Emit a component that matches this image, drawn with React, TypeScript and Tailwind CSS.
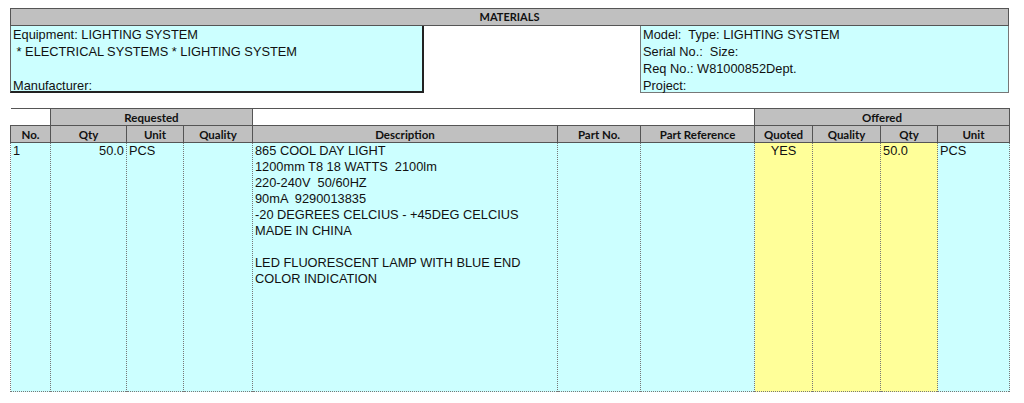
import React from 'react';

const cols = [40, 76, 57, 69, 305, 83, 114, 58, 68, 57, 72];

const descLines = [
  '865 COOL DAY LIGHT',
  '1200mm T8 18 WATTS  2100lm',
  '220-240V  50/60HZ',
  '90mA  9290013835',
  '-20 DEGREES CELCIUS - +45DEG CELCIUS',
  'MADE IN CHINA',
  '',
  'LED FLUORESCENT LAMP WITH BLUE END',
  'COLOR INDICATION',
];

const head = 'bg-[#c0c0c0] border border-[#555] text-center font-bold text-[11.5px] leading-[15px] text-[#111] p-0';
const body = 'align-top border-x border-dotted border-[#777] text-[12.8px] leading-[16px] text-[#111] px-[2px] pt-0';

const App: React.FC = () => {
  return (
    <div className="w-[1024px] h-[403px] bg-white pt-[8px] px-[10px]" style={{ fontFamily: '"Liberation Sans", Arial, sans-serif' }}>
      {/* Title */}
      <div className="w-[999px] h-[18px] bg-[#c0c0c0] border border-[#555] text-center font-bold text-[11px] leading-[16px] text-[#111]" style={{ fontFamily: 'Lato, "Open Sans", sans-serif' }}>
        MATERIALS
      </div>

      {/* Info boxes */}
      <div className="flex w-[999px] h-[67px] text-[12.8px] leading-[17px] text-[#111]">
        <div className="w-[414px] bg-[#ccffff] border-l border-[#666] border-r-2 border-b-2 border-r-[#222] border-b-[#222] pl-[2px]">
          <div>Equipment: LIGHTING SYSTEM</div>
          <div>&nbsp;* ELECTRICAL SYSTEMS * LIGHTING SYSTEM</div>
          <div>&nbsp;</div>
          <div>Manufacturer:</div>
        </div>
        <div className="w-[216px]" />
        <div className="w-[369px] bg-[#ccffff] border-l border-b border-[#777] border-r pl-[2px]">
          <div>Model:&nbsp; Type: LIGHTING SYSTEM</div>
          <div>Serial No.:&nbsp; Size:</div>
          <div>Req No.: W81000852Dept.</div>
          <div>Project:</div>
        </div>
      </div>

      {/* Table */}
      <table className="mt-[15px] table-fixed border-collapse w-[999px]">
        <colgroup>
          {cols.map((w, i) => (
            <col key={i} style={{ width: w }} />
          ))}
        </colgroup>
        <thead style={{ fontFamily: 'Lato, "Open Sans", sans-serif' }}>
          <tr className="h-[17px]">
            <th className="border-t border-[#555] bg-white p-0" />
            <th colSpan={3} className={head}>Requested</th>
            <th colSpan={3} className="border border-[#555] bg-white p-0" />
            <th colSpan={4} className={head}>Offered</th>
          </tr>
          <tr className="h-[17px]">
            {['No.', 'Qty', 'Unit', 'Quality', 'Description', 'Part No.', 'Part Reference', 'Quoted', 'Quality', 'Qty', 'Unit'].map((h, i) => (
              <th key={i} className={head}>{h}</th>
            ))}
          </tr>
        </thead>
        <tbody>
          <tr className="h-[249px] border-b border-dotted border-[#777]">
            <td className={`${body} bg-[#ccffff]`}>1</td>
            <td className={`${body} bg-[#ccffff] text-right`}>50.0</td>
            <td className={`${body} bg-[#ccffff]`}>PCS</td>
            <td className={`${body} bg-[#ccffff]`} />
            <td className={`${body} bg-[#ccffff]`}>
              {descLines.map((l, i) => (
                <div key={i} className="whitespace-pre">{l || '\u00a0'}</div>
              ))}
            </td>
            <td className={`${body} bg-[#ccffff]`} />
            <td className={`${body} bg-[#ccffff]`} />
            <td className={`${body} bg-[#ffff99] text-center`}>YES</td>
            <td className={`${body} bg-[#ffff99]`} />
            <td className={`${body} bg-[#ffff99]`}>50.0</td>
            <td className={`${body} bg-[#ccffff]`}>PCS</td>
          </tr>
        </tbody>
      </table>
    </div>
  );
};

export default App;
